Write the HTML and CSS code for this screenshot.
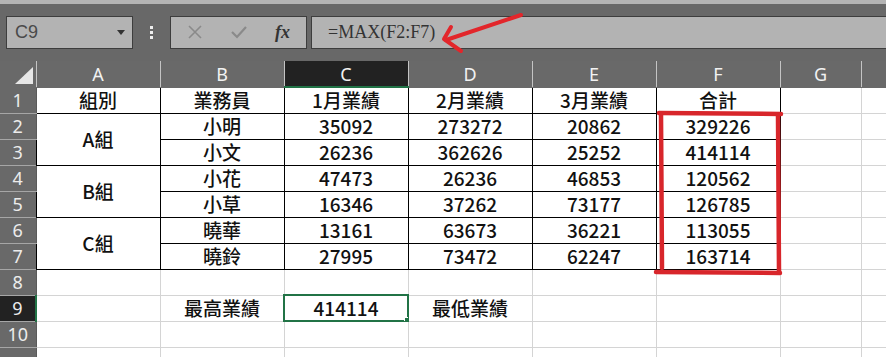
FILE: index.html
```html
<!DOCTYPE html>
<html lang="zh-Hant">
<head>
  <meta charset="UTF-8" />
  <title>業績表</title>
  <link rel="stylesheet" href="styles.css">
</head>
<body>

  <div class="toolbar">
    <div class="namebox">
      <span>C9</span>
      <svg class="caret" width="8" height="5" viewBox="0 0 8 5"><path d="M0 0 H8 L4 5 Z" fill="#333"/></svg>
    </div>
    <div class="grip"><i></i><i></i><i></i></div>
    <div class="fxbox">
      <svg width="14" height="14" viewBox="0 0 14 14"><path d="M1 1 L13 13 M13 1 L1 13" stroke="#8a8a8a" stroke-width="1.6" fill="none"/></svg>
      <svg width="16" height="14" viewBox="0 0 16 14"><path d="M1 7 L6 12 L15 2" stroke="#8a8a8a" stroke-width="2.2" fill="none"/></svg>
      <span class="fx">fx</span>
    </div>
    <div class="formula">=MAX(F2:F7)</div>
  </div>

  <table class="grid">
    <colgroup>
      <col class="c-head">
      <col class="c-wide"><col class="c-wide"><col class="c-wide">
      <col class="c-wide"><col class="c-wide"><col class="c-wide">
      <col class="c-g"><col>
    </colgroup>
    <thead>
      <tr>
        <th class="corner"><span></span></th>
        <th>A</th><th>B</th><th class="sel-col">C</th><th>D</th><th>E</th><th>F</th><th>G</th><th></th>
      </tr>
    </thead>
    <tbody>
      <tr><th>1</th><td class="b">組別</td><td class="b">業務員</td><td class="b">1月業績</td><td class="b">2月業績</td><td class="b">3月業績</td><td class="b">合計</td><td></td><td></td></tr>
      <tr><th>2</th><td class="b" rowspan="2">A組</td><td class="b">小明</td><td class="b">35092</td><td class="b">273272</td><td class="b">20862</td><td class="b">329226</td><td></td><td></td></tr>
      <tr><th>3</th><td class="b">小文</td><td class="b">26236</td><td class="b">362626</td><td class="b">25252</td><td class="b">414114</td><td></td><td></td></tr>
      <tr><th>4</th><td class="b" rowspan="2">B組</td><td class="b">小花</td><td class="b">47473</td><td class="b">26236</td><td class="b">46853</td><td class="b">120562</td><td></td><td></td></tr>
      <tr><th>5</th><td class="b">小草</td><td class="b">16346</td><td class="b">37262</td><td class="b">73177</td><td class="b">126785</td><td></td><td></td></tr>
      <tr><th>6</th><td class="b" rowspan="2">C組</td><td class="b">曉華</td><td class="b">13161</td><td class="b">63673</td><td class="b">36221</td><td class="b">113055</td><td></td><td></td></tr>
      <tr><th>7</th><td class="b">曉鈴</td><td class="b">27995</td><td class="b">73472</td><td class="b">62247</td><td class="b">163714</td><td></td><td></td></tr>
      <tr><th>8</th><td></td><td></td><td></td><td></td><td></td><td></td><td></td><td></td></tr>
      <tr><th class="sel-row">9</th><td></td><td>最高業績</td><td class="active">414114</td><td>最低業績</td><td></td><td></td><td></td><td></td></tr>
      <tr><th>10</th><td></td><td></td><td></td><td></td><td></td><td></td><td></td><td></td></tr>
      <tr class="last"><th></th><td></td><td></td><td></td><td></td><td></td><td></td><td></td><td></td></tr>
    </tbody>
  </table>

  <!-- hand drawn notes over the sheet -->
  <svg class="marks" width="886" height="357" viewBox="0 0 886 357">
    <g stroke="#d8262b" stroke-width="4.5" stroke-linecap="round" fill="none">
      <path d="M659 113 L781 114"/>
      <path d="M661 114 L662 268"/>
      <path d="M778 116 L779 272"/>
      <path d="M656 272 L780 273"/>
    </g>
    <g stroke="#e2262b" stroke-width="4" stroke-linecap="round" stroke-linejoin="round" fill="none">
      <path d="M521 15 L446 40"/>
      <path d="M451 27 L444 39 L461 51"/>
    </g>
  </svg>

</body>
</html>
```

FILE: styles.css
```css
* {
  box-sizing: border-box;
}

body {
  margin: 0;
  padding: 0;
  width: 886px;
  height: 357px;
  overflow: hidden;
  position: relative;
  background-color: #fff;
  font-family: 'Noto Sans CJK TC', 'Noto Sans', sans-serif;
}

.toolbar {
  height: 61px;
  background-color: #686868;
  border-top: 4px solid #b4b4b4;
  display: flex;
  align-items: center;
  padding: 0 0 1px 6px;
}

.namebox {
  width: 127px;
  height: 33px;
  background-color: #b3b3b3;
  border: 1px solid #3d3d3d;
  display: flex;
  align-items: center;
  justify-content: space-between;
  padding: 0 7px 0 8px;
  font-family: 'Liberation Sans', sans-serif;
  font-size: 18px;
  color: #4a4a4a;
}

.grip {
  width: 37px;
  display: flex;
  flex-direction: column;
  align-items: center;
  gap: 2px;
}

.grip i {
  width: 3px;
  height: 3px;
  background-color: #eee;
}

.fxbox {
  width: 137px;
  height: 33px;
  background-color: #b3b3b3;
  border: 1px solid #3d3d3d;
  display: flex;
  align-items: center;
  justify-content: space-between;
  padding: 0 16px 0 17px;
}

.fx {
  font-family: 'Liberation Serif', serif;
  font-style: italic;
  font-weight: bold;
  font-size: 18px;
  color: #333;
}

.formula {
  flex: 1;
  height: 33px;
  margin-left: 4px;
  background-color: #b3b3b3;
  border: 1px solid #3d3d3d;
  border-right: none;
  padding-left: 16px;
  line-height: 31px;
  font-family: 'Liberation Serif', serif;
  font-size: 18px;
  color: #333;
}

.grid {
  border-collapse: collapse;
  table-layout: fixed;
  width: 900px;
}

.c-head { width: 36px; }
.c-wide { width: 124px; }
.c-g { width: 81px; }

.grid th,
.grid td {
  height: 26px;
  padding: 0;
  text-align: center;
  white-space: nowrap;
  overflow: hidden;
}

.grid thead th {
  background-color: #696969;
  color: #f2f2f2;
  font-family: 'Noto Sans', sans-serif;
  font-weight: normal;
  font-size: 18px;
  border-left: 1px solid #c4c4c4;
  border-right: 1px solid #c4c4c4;
  border-bottom: 1px solid #696969;
}

.grid thead th.corner {
  border-left: none;
  position: relative;
}

.corner span {
  position: absolute;
  left: 15px;
  top: 6px;
  width: 0;
  height: 0;
  border-left: 18px solid transparent;
  border-bottom: 17px solid #e6e6e6;
}

.grid thead th.sel-col {
  background-color: #222;
  border-bottom: 2px solid #217346;
}

.grid tbody th {
  background-color: #696969;
  color: #ececec;
  font-family: 'Noto Sans', sans-serif;
  font-weight: normal;
  font-size: 18px;
  border-top: 1px solid #a6a6a6;
  border-bottom: 1px solid #a6a6a6;
  border-right: 1px solid #5a5a5a;
}

.grid tbody th.sel-row {
  background-color: #222;
  border-right: 2px solid #217346;
}

.grid td {
  border: 1px solid #d4d4d4;
  font-size: 19px;
  font-weight: 500;
  color: #111;
  line-height: 22px;
}

.grid td.b {
  border: 1px solid #000;
}

.grid td.active {
  position: relative;
  outline: 2px solid #217346;
  outline-offset: -1px;
}

.grid td.active::after {
  content: "";
  position: absolute;
  right: -3px;
  bottom: -3px;
  width: 5px;
  height: 5px;
  background-color: #217346;
  border: 1px solid #fff;
}

.marks {
  position: absolute;
  left: 0;
  top: 0;
  pointer-events: none;
}
```
